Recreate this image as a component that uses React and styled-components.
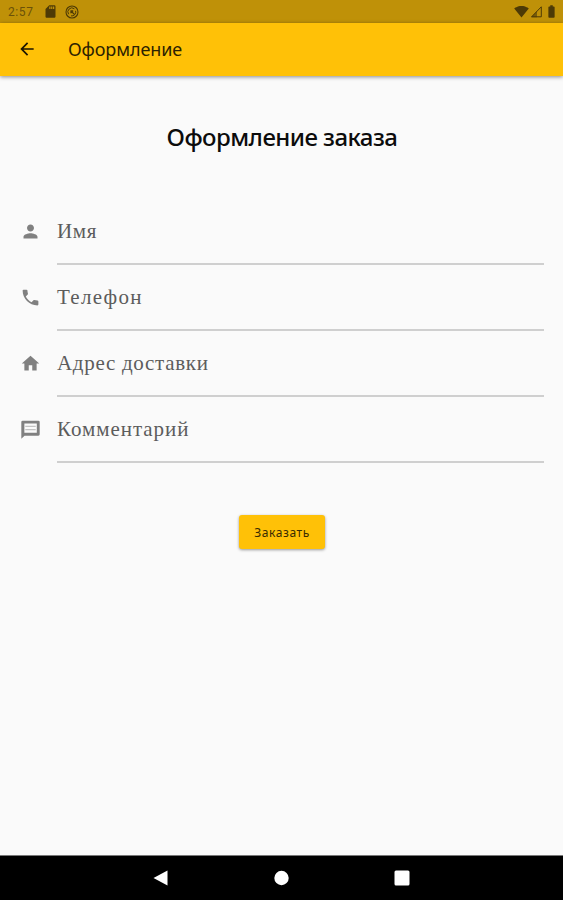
import React from "react";
import styled, { createGlobalStyle } from "styled-components";
import {
  MdArrowBack,
  MdPerson,
  MdPhone,
  MdHome,
  MdSdCard,
  MdSignalWifi4Bar,
  MdBatteryFull,
} from "react-icons/md";

const GlobalStyle = createGlobalStyle`
  * {
    box-sizing: border-box;
  }
  body {
    margin: 0;
    background-color: #fafafa;
  }
`;

const Screen = styled.div`
  display: flex;
  flex-direction: column;
  height: 100vh;
  background-color: #fafafa;
  font-family: "Liberation Serif", serif;
`;

const StatusBar = styled.div`
  display: flex;
  justify-content: space-between;
  align-items: center;
  flex: none;
  height: 23px;
  padding: 0 4px 0 8px;
  background-color: #bf9108;
  color: #4d3a06;
`;

const StatusGroup = styled.div`
  display: flex;
  align-items: center;
  gap: ${(props) => props.$gap}px;
`;

const Clock = styled.span`
  width: 28px;
  font-family: Roboto, sans-serif;
  font-size: 12px;
  letter-spacing: 0.6px;
  line-height: 23px;
  padding-top: 2px;
  color: #6b5108;
`;

const AppBar = styled.header`
  display: flex;
  align-items: center;
  flex: none;
  height: 53px;
  padding: 0 0 2px 17px;
  background-color: #ffc107;
  box-shadow: 0 1px 4px rgba(0, 0, 0, 0.45);
  color: #1c1500;
`;

const BarTitle = styled.h1`
  margin: 0 0 0 31px;
  font-family: "Noto Sans", sans-serif;
  font-size: 18px;
  font-weight: 400;
  letter-spacing: -0.1px;
  color: #2c2101;
`;

const Content = styled.main`
  display: flex;
  flex-direction: column;
  align-items: center;
  flex: 1;
  padding: 45px 19px 0 20px;
`;

const Heading = styled.h2`
  margin: 0;
  height: 32px;
  line-height: 32px;
  font-family: "Noto Sans", sans-serif;
  font-size: 24px;
  font-weight: 500;
  letter-spacing: -0.55px;
  color: #0c0c0c;
  white-space: nowrap;
`;

const Form = styled.form`
  display: flex;
  flex-direction: column;
  width: 100%;
  margin-top: 46px;
`;

const Row = styled.div`
  display: flex;
  height: 66px;
  color: #808080;

  svg {
    flex: none;
    margin: 22px 16px 0 0;
  }
`;

const Label = styled.label`
  flex: 1;
  height: 66px;
  border-bottom: 2px solid #cfcfcf;
  line-height: 64px;
  font-size: 21px;
  letter-spacing: ${(props) => props.$spacing}px;
  color: #5c5c5c;
`;

const Button = styled.button`
  width: 86px;
  height: 34px;
  margin-top: 52px;
  padding: 0;
  border: none;
  border-radius: 3px;
  background-color: #ffc107;
  box-shadow: 0 1px 3px rgba(0, 0, 0, 0.4);
  font-family: "Noto Sans", sans-serif;
  font-size: 12px;
  letter-spacing: 0.6px;
  color: #3a2c02;
`;

const NavBar = styled.nav`
  display: flex;
  justify-content: space-between;
  align-items: center;
  flex: none;
  height: 45px;
  padding: 0 153px 0 153px;
  border-top: 1px solid #777;
  background-color: #000;
`;

const MessageIcon = ({ size }) => (
  <svg width={size} height={size} viewBox="0 0 24 24" fill="currentColor">
    <path
      fillRule="evenodd"
      d="M3 2h18a1.5 1.5 0 0 1 1.5 1.5v14A1.5 1.5 0 0 1 21 19H5.2L1.5 22.5v-19A1.5 1.5 0 0 1 3 2zM5 5.2v10.6h14.2V5.2z"
    />
    <path d="M6 7.6h12v1.4H6zM6 11.4h12v1.4H6z" opacity="0.45" />
  </svg>
);

const fields = [
  { text: "Имя", Icon: MdPerson, spacing: 0.7 },
  { text: "Телефон", Icon: MdPhone, spacing: 1.3 },
  { text: "Адрес доставки", Icon: MdHome, spacing: 0.7 },
  { text: "Комментарий", Icon: MessageIcon, spacing: 0.95 },
];

const DataSaverIcon = () => (
  <svg width="14" height="14" viewBox="0 0 14 14" fill="none" stroke="currentColor">
    <circle cx="7" cy="7" r="6" strokeWidth="1.1" />
    <path d="M3.6 9.2A4 4 0 0 1 9.4 3.8M10.6 5.8A4 4 0 0 1 6 10.9" strokeWidth="1" />
    <path d="M6 6l3.6 3.6M5.6 6h2.6M6 5.6v2.6" strokeWidth="1.3" />
  </svg>
);

const SignalIcon = () => (
  <svg width="13" height="13" viewBox="0 0 13 13">
    <path d="M1.6 11.8L11.3 1.8V11.8z" fill="none" stroke="currentColor" />
    <path d="M1 12.2L7 6.2V12.2z" fill="currentColor" opacity="0.6" />
  </svg>
);

export default function App() {
  return (
    <Screen>
      <GlobalStyle />
      <StatusBar>
        <StatusGroup $gap={7}>
          <Clock>2:57</Clock>
          <MdSdCard size={15} />
          <DataSaverIcon />
        </StatusGroup>
        <StatusGroup $gap={1}>
          <MdSignalWifi4Bar size={15} />
          <SignalIcon />
          <MdBatteryFull size={15} />
        </StatusGroup>
      </StatusBar>

      <AppBar>
        <MdArrowBack size={20} />
        <BarTitle>Оформление</BarTitle>
      </AppBar>

      <Content>
        <Heading>Оформление заказа</Heading>
        <Form>
          {fields.map(({ text, Icon, spacing }) => (
            <Row key={text}>
              <Icon size={21} />
              <Label $spacing={spacing}>{text}</Label>
            </Row>
          ))}
        </Form>
        <Button>Заказать</Button>
      </Content>

      <NavBar>
        <svg width="15" height="16" viewBox="0 0 15 16">
          <path d="M0.5 8L14.5 0.5V15.5z" fill="#fff" />
        </svg>
        <svg width="15" height="16" viewBox="0 0 15 16">
          <circle cx="7.5" cy="8" r="7.2" fill="#fff" />
        </svg>
        <svg width="16" height="16" viewBox="0 0 16 16">
          <rect x="0.5" y="0.5" width="15" height="15" rx="1.5" fill="#fff" />
        </svg>
      </NavBar>
    </Screen>
  );
}
